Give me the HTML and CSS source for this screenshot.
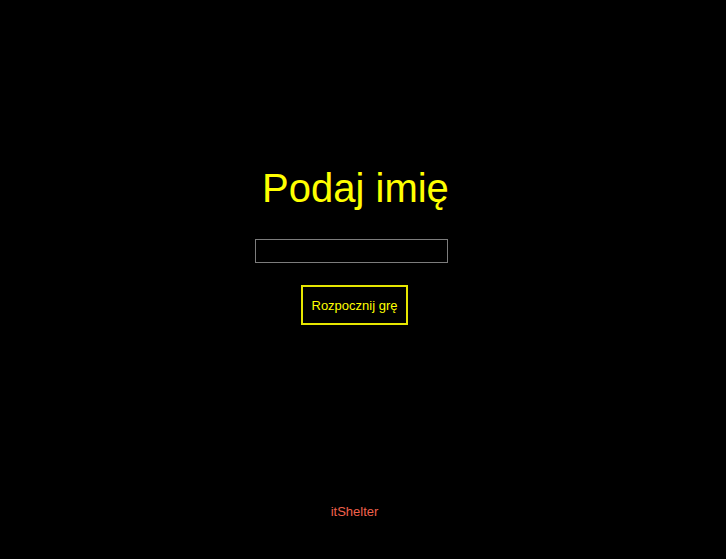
FILE: index.html
```html
<!DOCTYPE html>
<html lang="pl">
<head>
<meta charset="utf-8">
<title>Podaj imię</title>
<link rel="stylesheet" href="styles.css">
</head>
<body>
<div class="screen">
  <main class="form">
    <h1 class="title">Podaj imię</h1>
    <input class="name-input" type="text" aria-label="Imię">
    <button class="start-btn" type="button">Rozpocznij grę</button>
  </main>
  <footer class="footer">itShelter</footer>
</div>
</body>
</html>
```
FILE: styles.css
```css
html, body {
  margin: 0;
  padding: 0;
  background: #000;
  height: 100%;
  overflow: hidden;
}
.screen {
  width: 709px;
  height: 559px;
  display: flex;
  flex-direction: column;
  align-items: center;
  font-family: "Liberation Sans", Arial, sans-serif;
}
.form {
  display: flex;
  flex-direction: column;
  align-items: center;
  padding-top: 165px;
}
.title {
  margin: 0;
  font-size: 40px;
  line-height: 46px;
  font-weight: normal;
  color: #ffff00;
  margin-left: 2px;
}
.name-input {
  box-sizing: border-box;
  width: 193px;
  height: 24px;
  margin: 28px 6px 0 0;
  background: #000;
  border: 1px solid #7c7c7c;
  outline: none;
  padding: 0 4px;
  color: #ffff00;
  font-family: inherit;
  font-size: 13px;
}
.start-btn {
  box-sizing: border-box;
  width: 107px;
  height: 40px;
  margin-top: 22px;
  background: #000;
  border: 2px solid #e6e600;
  color: #ffff00;
  font-family: inherit;
  font-size: 13px;
  padding: 0;
}
.footer {
  margin-top: auto;
  padding-bottom: 40px;
  font-size: 13px;
  line-height: 15px;
  color: #f0614c;
}
```
